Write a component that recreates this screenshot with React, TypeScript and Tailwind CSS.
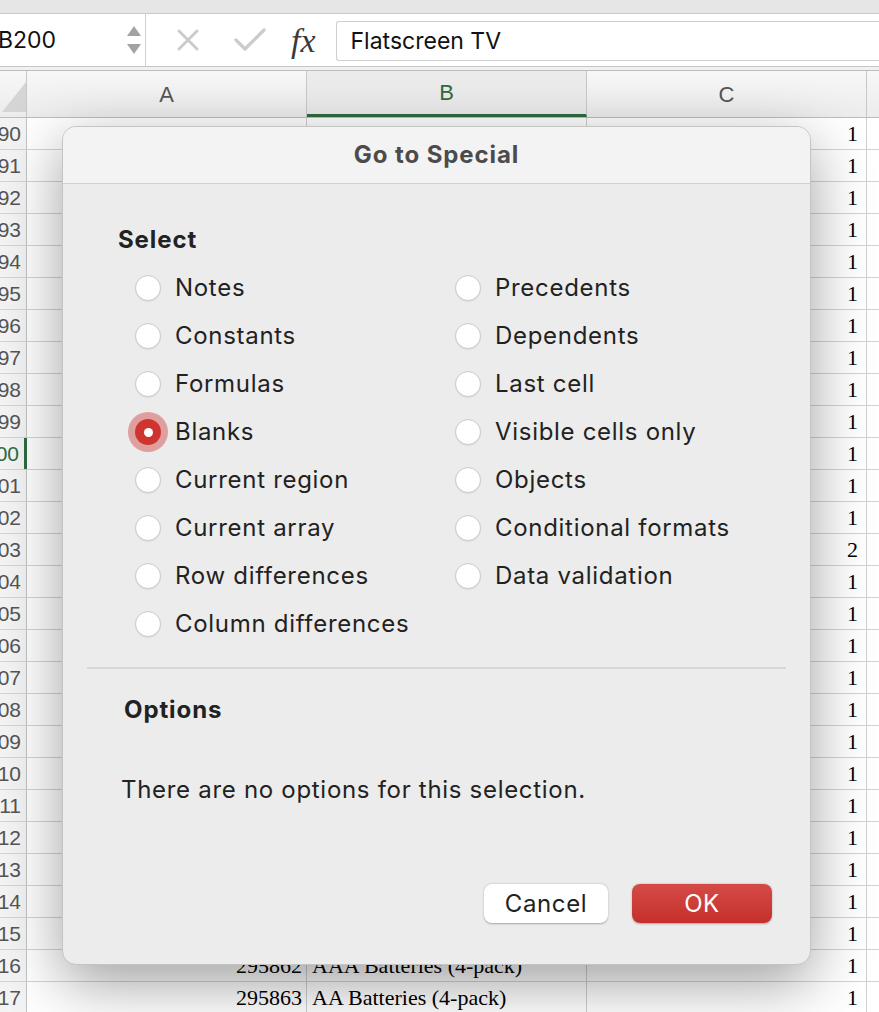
import React from "react";

const rows = Array.from({ length: 28 }, (_, i) => 190 + i);

const leftOptions = [
  "Notes",
  "Constants",
  "Formulas",
  "Blanks",
  "Current region",
  "Current array",
  "Row differences",
  "Column differences",
];

const rightOptions = [
  "Precedents",
  "Dependents",
  "Last cell",
  "Visible cells only",
  "Objects",
  "Conditional formats",
  "Data validation",
];

const cellA: Record<number, string> = { 216: "295862", 217: "295863" };
const cellB: Record<number, string> = {
  216: "AAA Batteries (4-pack)",
  217: "AA Batteries (4-pack)",
};

function Radio({ label, checked }: { label: string; checked?: boolean }) {
  return (
    <div className="flex items-center h-[48px]">
      {checked ? (
        <span className="w-[26px] h-[26px] rounded-full bg-[#cf3430] flex items-center justify-center shadow-[0_0_0_7px_rgba(214,96,94,0.55)]">
          <span className="w-[9px] h-[9px] rounded-full bg-white" />
        </span>
      ) : (
        <span className="w-[26px] h-[26px] rounded-full bg-white border border-[#c9c9c9] shadow-[0_1px_1px_rgba(0,0,0,0.06)]" />
      )}
      <span className="ml-[14px] text-[24px] tracking-[0.7px] text-[#222]">{label}</span>
    </div>
  );
}

function Dialog() {
  return (
    <div className="absolute left-[62px] top-[126px] w-[749px] h-[839px] rounded-[14px] bg-[#ececec] border border-[#c4c4c4] shadow-[0_18px_60px_rgba(0,0,0,0.38)] flex flex-col overflow-hidden font-['Inter',sans-serif]">
      <div className="h-[57px] bg-[#f3f3f3] border-b border-[#d2d2d2] flex items-center justify-center">
        <span className="text-[24px] tracking-[0.9px] font-bold text-[#4b4b4b]">Go to Special</span>
      </div>
      <div className="pt-[42px] pl-[55px]">
        <div className="text-[24px] tracking-[0.9px] font-bold text-[#222] leading-[28px]">Select</div>
      </div>
      <div className="mt-[10px] pl-[72px] grid grid-cols-[320px_1fr]">
        <div className="flex flex-col">
          {leftOptions.map((o) => (
            <Radio key={o} label={o} checked={o === "Blanks"} />
          ))}
        </div>
        <div className="flex flex-col">
          {rightOptions.map((o) => (
            <Radio key={o} label={o} />
          ))}
        </div>
      </div>
      <div className="mx-[24px] mt-[19px] border-t-2 border-[#d6d6d6]" />
      <div className="pl-[61px] pt-[27px] text-[24px] tracking-[0.9px] font-bold text-[#222] leading-[28px]">Options</div>
      <div className="pl-[58px] pt-[52px] text-[24px] tracking-[0.7px] text-[#222] leading-[28px]">
        There are no options for this selection.
      </div>
      <div className="mt-auto mb-[41px] mr-[38px] flex justify-end gap-[24px]">
        <button className="w-[124px] h-[39px] rounded-[8px] bg-white text-[24px] tracking-[0.6px] text-[#222] shadow-[0_0.5px_2px_rgba(0,0,0,0.3)]">
          Cancel
        </button>
        <button className="w-[140px] h-[39px] rounded-[8px] bg-gradient-to-b from-[#d54a47] to-[#c52f2b] text-[24px] tracking-[0.6px] text-white shadow-[0_0.5px_2px_rgba(0,0,0,0.3)]">
          OK
        </button>
      </div>
    </div>
  );
}

export default function App() {
  return (
    <div className="relative w-[879px] h-[1012px] overflow-hidden bg-white font-['Liberation_Sans',sans-serif]">
      {/* toolbar strip */}
      <div className="h-[14px] bg-[#e6e6e6] border-b border-[#c9c9c9]" />

      {/* formula bar */}
      <div className="h-[53px] flex bg-white border-b border-[#c6c6c6]">
        <div className="w-[146px] border-r border-[#d0d0d0] flex items-center justify-between pr-[3px]">
          <span className="-ml-[2px] text-[23px] text-[#111] font-['Inter',sans-serif]">B200</span>
          <svg width="16" height="34" viewBox="0 0 16 34">
            <path d="M8 3 L15 13 L1 13 Z" fill="#a3a3a3" />
            <path d="M8 31 L15 21 L1 21 Z" fill="#a3a3a3" />
          </svg>
        </div>
        <div className="flex items-center pl-[30px]">
          <svg width="24" height="24" viewBox="0 0 24 24">
            <path d="M3 3 L21 21 M21 3 L3 21" stroke="#cbcbcb" strokeWidth="3" strokeLinecap="round" />
          </svg>
          <svg width="34" height="26" viewBox="0 0 34 26" className="ml-[33px]">
            <path d="M3 13 L12 22 L31 3" stroke="#cbcbcb" strokeWidth="3.2" fill="none" strokeLinecap="round" strokeLinejoin="round" />
          </svg>
          <span className="ml-[24px] text-[34px] italic text-[#3a3a3a] font-['Liberation_Serif',serif]">fx</span>
        </div>
        <div className="ml-[20px] mt-[7px] mb-[5px] flex-1 border border-r-0 border-[#cfcfcf] rounded-l-[3px] flex items-center pl-[14px]">
          <span className="text-[23px] text-[#111] font-['Inter',sans-serif]">Flatscreen TV</span>
        </div>
      </div>

      <div className="h-[3px] bg-[#f1f1f1]" />

      {/* column headers */}
      <div className="h-[48px] flex border-t border-b border-[#bdbdbd] bg-gradient-to-b from-[#f7f7f7] to-[#ececec] text-[22px] text-[#555]">
        <div className="w-[27px] border-r border-[#c8c8c8] flex items-end justify-end pb-[5px]">
          <svg width="24" height="30" viewBox="0 0 24 30">
            <path d="M24 0 L24 30 L0 30 Z" fill="#d5d5d5" />
          </svg>
        </div>
        <div className="w-[280px] border-r border-[#c8c8c8] flex items-center justify-center">A</div>
        <div className="w-[280px] border-r border-[#c8c8c8] border-b-[3px] border-b-[#2f6b41] bg-[#ebebeb] flex items-center justify-center text-[#2f6b41]">
          B
        </div>
        <div className="w-[280px] border-r border-[#c8c8c8] flex items-center justify-center">C</div>
        <div className="flex-1" />
      </div>

      {/* rows */}
      {rows.map((r) => (
        <div key={r} className="h-[32px] flex border-b border-[#d3d3d3]">
          <div
            className={`w-[27px] shrink-0 overflow-hidden flex items-center justify-end pr-[5px] bg-[#f3f3f3] text-[21px] ${
              r === 200 ? "text-[#2f6b41] border-r-[3px] border-[#2f6b41]" : "text-[#555] border-r border-[#c3c3c3]"
            }`}
          >
            <span className="whitespace-nowrap">{r}</span>
          </div>
          <div className="w-[280px] shrink-0 border-r border-[#cfcfcf] flex items-center justify-end pr-[4px] text-[22px] text-black font-['Liberation_Serif',serif]">
            {cellA[r] ?? ""}
          </div>
          <div className="w-[280px] shrink-0 border-r border-[#cfcfcf] flex items-center pl-[5px] text-[22px] text-black font-['Liberation_Serif',serif] whitespace-nowrap overflow-hidden">
            {cellB[r] ?? ""}
          </div>
          <div className="w-[280px] shrink-0 border-r border-[#cfcfcf] flex items-center justify-end pr-[8px] text-[22px] text-black font-['Liberation_Serif',serif]">
            {r === 203 ? "2" : "1"}
          </div>
          <div className="flex-1" />
        </div>
      ))}

      <Dialog />
    </div>
  );
}
